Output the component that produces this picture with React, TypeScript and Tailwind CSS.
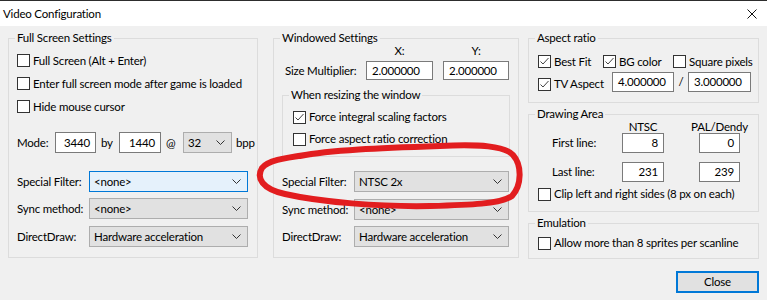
import type { ReactNode } from 'react'

const Check = ({ checked = false }: { checked?: boolean }) => (
  <span className="flex h-[13px] w-[13px] shrink-0 items-center justify-center border border-[#333333] bg-white">
    {checked && (
      <svg width="11" height="11" viewBox="0 0 11 11">
        <polyline points="1.5,5.5 4,8 9.5,2" fill="none" stroke="#444" strokeWidth="1" />
      </svg>
    )}
  </span>
)

const CheckRow = ({ label, checked, className = '' }: { label: string; checked?: boolean; className?: string }) => (
  <div className={`flex items-center gap-[3px] ${className}`}>
    <Check checked={checked} />
    <span className="whitespace-nowrap">{label}</span>
  </div>
)

const Chevron = () => (
  <svg width="9" height="5" viewBox="0 0 9 5" className="shrink-0">
    <polyline points="0.5,0.5 4.5,4.5 8.5,0.5" fill="none" stroke="#333" strokeWidth="1" />
  </svg>
)

const Select = ({ value, width, focused = false }: { value: string; width: string; focused?: boolean }) => (
  <div
    className={`flex h-full shrink-0 items-center justify-between border pl-[4px] pr-[6px] ${width} ${
      focused ? 'border-[#0078d7] bg-[#e5f1fb]' : 'border-[#adadad] bg-[#e1e1e1]'
    }`}
  >
    <span className="whitespace-nowrap">{value}</span>
    <Chevron />
  </div>
)

const Field = ({ value, width, right = false }: { value: string; width: string; right?: boolean }) => (
  <div
    className={`flex h-full shrink-0 items-center border border-[#7a7a7a] bg-white ${width} ${
      right ? 'justify-end pr-[5px]' : 'pl-[5px]'
    }`}
  >
    {value}
  </div>
)

const Group = ({ title, className = '', children }: { title: string; className?: string; children?: ReactNode }) => (
  <fieldset className={`flex min-w-0 shrink-0 flex-col border border-[#dcdcdc] ${className}`}>
    <legend className="ml-[6px] px-[2px] leading-[14px]">{title}</legend>
    {children}
  </fieldset>
)

const LabelSelect = ({ label, value, labelW, selectW, focused, className = '' }: any) => (
  <div className={`flex h-[21px] items-center ${className}`}>
    <span className={`shrink-0 whitespace-nowrap ${labelW}`}>{label}</span>
    <Select value={value} width={selectW} focused={focused} />
  </div>
)

export default function App() {
  return (
    <div className="relative h-[300px] w-[767px] overflow-hidden bg-[#f0f0f0] font-['Lato',sans-serif] text-[11.5px] leading-[14px] tracking-[-0.2px] text-black">
      {/* title bar */}
      <div className="flex h-[26px] items-center justify-between border-t border-[#2d2d2d] bg-white pl-[3px] pr-[10px]">
        <span>Video Configuration</span>
        <svg width="10" height="10" viewBox="0 0 10 10">
          <path d="M0.5 0.5 L9.5 9.5 M9.5 0.5 L0.5 9.5" stroke="#111" strokeWidth="1" />
        </svg>
      </div>

      <div className="flex pl-[8px] pt-[5px]">
        {/* full screen */}
        <Group title="Full Screen Settings" className="h-[227px] w-[250px]">
          <div className="flex flex-col pl-[8px] pt-[4px]">
            <CheckRow label="Full Screen (Alt + Enter)" className="h-[23px]" />
            <CheckRow label="Enter full screen mode after game is loaded" className="h-[23px]" />
            <CheckRow label="Hide mouse cursor" className="h-[23px]" />
            <div className="mt-[14px] flex h-[21px] items-center">
              <span className="w-[38px] shrink-0">Mode:</span>
              <Field value="3440" width="w-[41px]" right />
              <span className="w-[23px] shrink-0 pl-[5px]">by</span>
              <Field value="1440" width="w-[42px]" right />
              <span className="w-[22px] shrink-0 pl-[5px]">@</span>
              <Select value="32" width="w-[49px]" />
              <span className="ml-[4px]">bpp</span>
            </div>
            <LabelSelect label="Special Filter:" value="<none>" labelW="w-[72px]" selectW="w-[159px]" focused className="mt-[18px]" />
            <LabelSelect label="Sync method:" value="<none>" labelW="w-[72px]" selectW="w-[159px]" className="mt-[6px]" />
            <LabelSelect label="DirectDraw:" value="Hardware acceleration" labelW="w-[72px]" selectW="w-[159px]" className="mt-[7px]" />
          </div>
        </Group>

        {/* windowed */}
        <Group title="Windowed Settings" className="ml-[15px] h-[227px] w-[246px]">
          <div className="flex h-[12px] items-center leading-[12px]">
            <span className="w-[92px] shrink-0" />
            <span className="w-[67px] shrink-0 text-center">X:</span>
            <span className="w-[10px] shrink-0" />
            <span className="w-[66px] shrink-0 text-center">Y:</span>
          </div>
          <div className="mt-[4px] flex h-[19px] items-center pl-[11px]">
            <span className="w-[81px] shrink-0 whitespace-nowrap">Size Multiplier:</span>
            <Field value="2.000000" width="w-[67px]" />
            <span className="w-[10px] shrink-0" />
            <Field value="2.000000" width="w-[66px]" />
          </div>
          <Group title="When resizing the window" className="ml-[8px] mt-[8px] h-[69px] w-[228px]">
            <div className="flex flex-col pl-[10px] pt-[4px]">
              <CheckRow label="Force integral scaling factors" checked className="h-[22px]" />
              <CheckRow label="Force aspect ratio correction" className="h-[22px]" />
            </div>
          </Group>
          <div className="flex flex-col pl-[8px]">
            <LabelSelect label="Special Filter:" value="NTSC 2x" labelW="w-[72px]" selectW="w-[155px]" className="mt-[14px]" />
            <LabelSelect label="Sync method:" value="<none>" labelW="w-[72px]" selectW="w-[155px]" className="mt-[7px]" />
            <LabelSelect label="DirectDraw:" value="Hardware acceleration" labelW="w-[72px]" selectW="w-[155px]" className="mt-[6px]" />
          </div>
        </Group>

        {/* right column */}
        <div className="ml-[9px] flex w-[231px] shrink-0 flex-col">
          <Group title="Aspect ratio" className="h-[72px] w-[231px]">
            <div className="mt-[6px] flex h-[21px] items-center pl-[9px]">
              <CheckRow label="Best Fit" checked className="w-[65px] shrink-0" />
              <CheckRow label="BG color" checked className="w-[70px] shrink-0" />
              <CheckRow label="Square pixels" />
            </div>
            <div className="flex h-[20px] items-center pl-[9px]">
              <CheckRow label="TV Aspect" checked className="mt-[4px] w-[74px] shrink-0" />
              <Field value="4.000000" width="w-[62px]" />
              <span className="w-[14px] shrink-0 text-center">/</span>
              <Field value="3.000000" width="w-[63px]" />
            </div>
          </Group>

          <Group title="Drawing Area" className="mt-[4px] h-[105px] w-[231px]">
            <div className="flex h-[12px] items-center leading-[12px]">
              <span className="w-[93px] shrink-0" />
              <span className="flex w-[42px] shrink-0 justify-center">NTSC</span>
              <span className="w-[35px] shrink-0" />
              <span className="flex w-[41px] shrink-0 justify-center whitespace-nowrap">PAL/Dendy</span>
            </div>
            <div className="flex h-[20px] items-center">
              <span className="w-[93px] shrink-0 pl-[23px]">First line:</span>
              <Field value="8" width="w-[42px]" right />
              <span className="w-[35px] shrink-0" />
              <Field value="0" width="w-[41px]" right />
            </div>
            <div className="mt-[9px] flex h-[20px] items-center">
              <span className="w-[93px] shrink-0 pl-[23px]">Last line:</span>
              <Field value="231" width="w-[42px]" right />
              <span className="w-[35px] shrink-0" />
              <Field value="239" width="w-[41px]" right />
            </div>
            <CheckRow label="Clip left and right sides (8 px on each)" className="h-[24px] pl-[9px]" />
          </Group>

          <Group title="Emulation" className="mt-[4px] h-[43px] w-[231px]">
            <CheckRow label="Allow more than 8 sprites per scanline" className="mt-[1px] h-[24px] pl-[9px]" />
          </Group>

          <div className="mt-[12px] flex justify-end">
            <div className="flex h-[22px] w-[83px] items-center justify-center border-2 border-[#0078d7] bg-[#e1e1e1]">
              Close
            </div>
          </div>
        </div>
      </div>

      {/* hand-drawn red marking */}
      <svg className="pointer-events-none absolute inset-0" width="767" height="300" viewBox="0 0 767 300">
        <path
          d="M300 156 C330 150 380 148 440 146 C480 144 505 146 513 155 C522 165 522 185 512 196 C500 204 470 205 430 206 C380 207 320 202 285 194 C262 189 256 178 262 168 C268 160 285 158 312 154"
          fill="none"
          stroke="#e21d1f"
          strokeWidth="6"
          strokeLinecap="round"
        />
      </svg>
    </div>
  )
}
